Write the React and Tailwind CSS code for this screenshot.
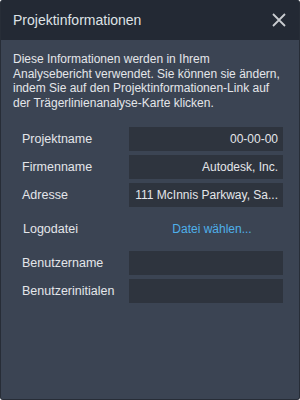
const rows = [
  { label: "Projektname", value: "00-00-00" },
  { label: "Firmenname", value: "Autodesk, Inc." },
  { label: "Adresse", value: "111 McInnis Parkway, Sa..." },
];

const App = () => {
  return (
    <div className="w-[300px] h-[400px] bg-white font-['Liberation_Sans',sans-serif]">
      <div className="w-full h-full flex flex-col rounded-[3px] overflow-hidden border-x border-b border-[#272d37] bg-[#3b4453] text-[#e4e6ea]">
        <div className="h-[40px] shrink-0 flex items-center justify-between pl-[12px] pr-[12px] bg-[#232934]">
          <h1 className="text-[14px] text-[#dfe2e6]">Projektinformationen</h1>
          <svg width="16" height="16" viewBox="0 0 16 16" className="text-[#c9ccd1]">
            <path d="M2 2L14 14M14 2L2 14" stroke="currentColor" strokeWidth="1.8" />
          </svg>
        </div>
        <div className="flex flex-col pl-[12px] pr-[10px] pt-[12px]">
          <p className="text-[12px] leading-[14.5px] whitespace-nowrap">
            Diese Informationen werden in Ihrem
            <br />
            Analysebericht verwendet. Sie können sie ändern,
            <br />
            indem Sie auf den Projektinformationen-Link auf
            <br />
            der Trägerlinienanalyse-Karte klicken.
          </p>
          <div className="flex flex-col gap-[4px] mt-[17px] pl-[9px] pr-[6px]">
            {rows.map((r) => (
              <div key={r.label} className="flex items-center h-[24px]">
                <span className="w-[107px] text-[12.5px]">{r.label}</span>
                <div className="flex-1 min-w-0 h-full bg-[#2e343e] flex items-center justify-end px-[5px]">
                  <span className="text-[12px] whitespace-nowrap">{r.value}</span>
                </div>
              </div>
            ))}
            <div className="flex items-center h-[36px]">
              <span className="w-[107px] text-[12.5px] pl-[1px]">Logodatei</span>
              <div className="flex-1 flex justify-center pl-[12px]">
                <span className="text-[12px] text-[#4fb0ea]">Datei wählen...</span>
              </div>
            </div>
            {["Benutzername", "Benutzerinitialen"].map((l) => (
              <div key={l} className="flex items-center h-[24px]">
                <span className="w-[107px] text-[12.5px]">{l}</span>
                <div className="flex-1 h-full bg-[#2e343e]"></div>
              </div>
            ))}
          </div>
        </div>
      </div>
    </div>
  );
};

export default App;
